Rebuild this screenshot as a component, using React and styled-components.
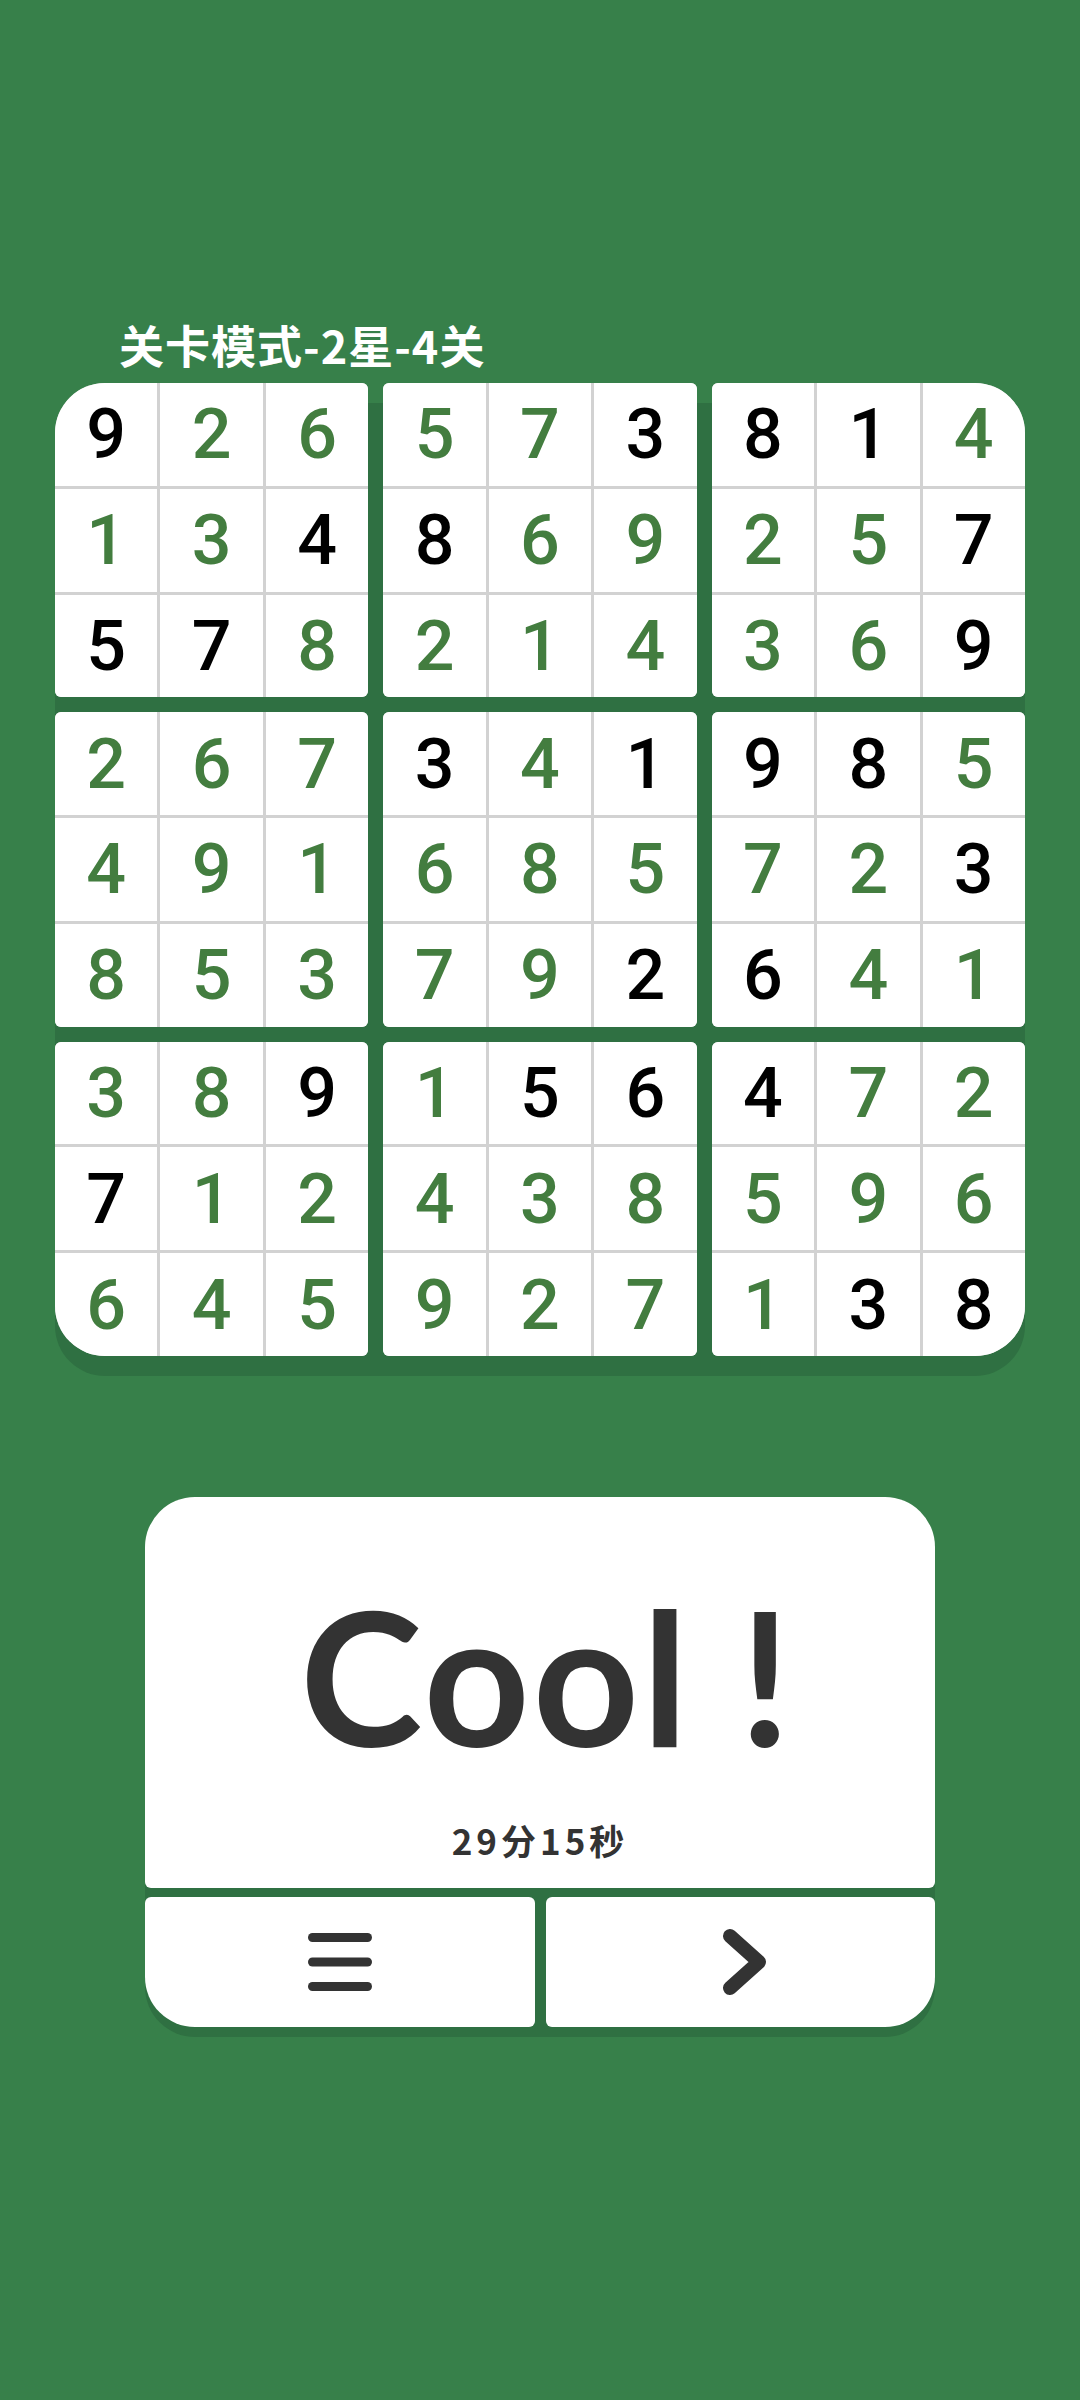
import React from 'react';
import styled, { createGlobalStyle } from 'styled-components';

const BG = '#37804a';
const DARK = '#2f7042';

const GlobalStyle = createGlobalStyle`
  html, body {
    margin: 0;
    padding: 0;
    background: ${BG};
  }
  body {
    font-family: "Noto Sans", "Noto Sans CJK SC", sans-serif;
  }
`;

const Page = styled.div`
  width: 1080px;
  min-height: 2400px;
  box-sizing: border-box;
  padding-top: 323px;
  background: ${BG};
  display: flex;
  flex-direction: column;
  align-items: center;
`;

const Title = styled.h1`
  align-self: flex-start;
  margin: 0 0 16px 119px;
  font: 700 45px/44px "Noto Sans CJK SC", sans-serif;
  letter-spacing: 1px;
  color: #fff;
`;

const Board = styled.div`
  width: 970px;
  height: 973px;
  display: grid;
  grid-template-columns: repeat(3, 1fr);
  grid-template-rows: repeat(3, 1fr);
  gap: 15px;
  border-radius: 50px;
  background: linear-gradient(to bottom, transparent 20px, ${DARK} 20px);
  box-shadow: 0 20px 0 ${DARK};
`;

const Block = styled.div`
  display: grid;
  grid-template-columns: repeat(3, 1fr);
  grid-template-rows: repeat(3, 1fr);
  gap: 3px;
  background: #d2d2d2;
  overflow: hidden;
  border-radius: ${(p) => p.$radius};
`;

const Cell = styled.div`
  background: #fff;
  display: flex;
  align-items: center;
  justify-content: center;
  font: 500 70px/1 Roboto, "Noto Sans", sans-serif;
  color: ${(p) => (p.$given ? '#000' : '#437d3f')};
`;

const Result = styled.div`
  margin-top: 141px;
  width: 790px;
  display: grid;
  grid-template-columns: 1fr 1fr;
  grid-template-rows: 391px 130px;
  gap: 9px 11px;
  border-radius: 50px;
  background: linear-gradient(to bottom, transparent 60px, ${DARK} 60px);
  box-shadow: 0 10px 0 ${DARK};
`;

const Banner = styled.div`
  grid-column: 1 / -1;
  background: #fff;
  border-radius: 50px 50px 6px 6px;
  display: flex;
  flex-direction: column;
  align-items: center;
`;

const Cool = styled.div`
  margin-top: 86px;
  padding-left: 14px;
  font: 700 185px/185px Lato, "Noto Sans", sans-serif;
  letter-spacing: 3px;
  color: #333;
  white-space: pre;
`;

const Time = styled.div`
  margin-top: 54px;
  font: 700 35px/35px "Noto Sans CJK SC", sans-serif;
  letter-spacing: 4px;
  color: #333;
`;

const ActionButton = styled.button`
  border: none;
  padding: 0;
  background: #fff;
  display: flex;
  align-items: center;
  justify-content: center;
  border-radius: ${(p) => (p.$side === 'left' ? '6px 6px 6px 50px' : '6px 6px 50px 6px')};
  cursor: pointer;
`;

const rows = [
  ['926573814', '100001110'],
  ['134869257', '001100001'],
  ['578214369', '110000001'],
  ['267341985', '000101110'],
  ['491685723', '000000001'],
  ['853792641', '000001100'],
  ['389156472', '001011100'],
  ['712438596', '100000000'],
  ['645927138', '000000011'],
];

const blockRadius = (b) => {
  const big = '50px';
  const small = '6px';
  return [
    b === 0 ? big : small,
    b === 2 ? big : small,
    b === 8 ? big : small,
    b === 6 ? big : small,
  ].join(' ');
};

const MenuIcon = () => (
  <svg width="64" height="58" viewBox="0 0 64 58">
    <g stroke="#333" strokeWidth="9" strokeLinecap="round">
      <line x1="4.5" y1="4.5" x2="59.5" y2="4.5" />
      <line x1="4.5" y1="29" x2="59.5" y2="29" />
      <line x1="4.5" y1="53.5" x2="59.5" y2="53.5" />
    </g>
  </svg>
);

const NextIcon = () => (
  <svg width="46" height="68" viewBox="0 0 46 68" style={{ marginLeft: 10 }}>
    <polyline
      points="8,8 37,34 8,60"
      fill="none"
      stroke="#333"
      strokeWidth="14"
      strokeLinecap="round"
      strokeLinejoin="round"
    />
  </svg>
);

export default function App() {
  const blocks = Array.from({ length: 9 }, (_, b) => {
    const br = Math.floor(b / 3) * 3;
    const bc = (b % 3) * 3;
    const cells = [];
    for (let r = 0; r < 3; r++) {
      for (let c = 0; c < 3; c++) {
        const [digits, mask] = rows[br + r];
        cells.push({ v: digits[bc + c], given: mask[bc + c] === '1' });
      }
    }
    return cells;
  });

  return (
    <>
      <GlobalStyle />
      <Page>
        <Title>关卡模式-2星-4关</Title>
        <Board>
          {blocks.map((cells, b) => (
            <Block key={b} $radius={blockRadius(b)}>
              {cells.map((cell, i) => (
                <Cell key={i} $given={cell.given}>
                  {cell.v}
                </Cell>
              ))}
            </Block>
          ))}
        </Board>
        <Result>
          <Banner>
            <Cool>Cool !</Cool>
            <Time>29分15秒</Time>
          </Banner>
          <ActionButton $side="left" aria-label="menu">
            <MenuIcon />
          </ActionButton>
          <ActionButton $side="right" aria-label="next">
            <NextIcon />
          </ActionButton>
        </Result>
      </Page>
    </>
  );
}
